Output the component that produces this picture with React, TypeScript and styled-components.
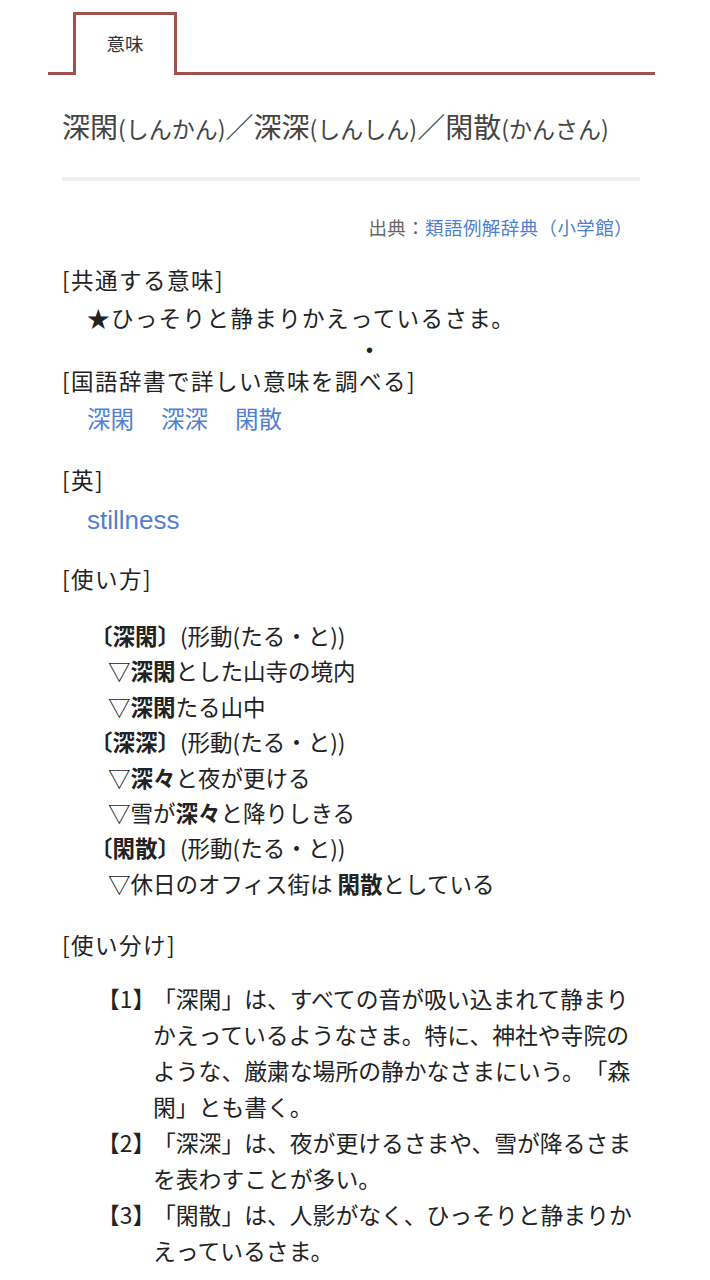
import styled, { createGlobalStyle } from "styled-components";

const GlobalStyle = createGlobalStyle`
  html, body {
    margin: 0;
    padding: 0;
    background: #fff;
  }
  body {
    font-family: "Noto Sans CJK JP", sans-serif;
    color: #222;
    text-spacing-trim: space-all;
  }
`;

const accent = "#a0524d";
const link = "#4f7fd4";

const Page = styled.div`
  width: 710px;
  padding-top: 12px;
  padding-bottom: 40px;
`;

const TabBar = styled.div`
  display: flex;
  height: 60px;
  margin: 0 55px 0 48px;
  border-bottom: 3px solid ${accent};
`;

const Tab = styled.div`
  box-sizing: border-box;
  display: flex;
  align-items: center;
  justify-content: center;
  width: 104px;
  height: 63px;
  margin-left: 25px;
  margin-bottom: -3px;
  padding-bottom: 4px;
  border: 3px solid ${accent};
  border-bottom: 0;
  background: #fff;
  color: #333;
  font-size: 18.5px;
`;

const Content = styled.div`
  padding: 0 70px 0 62px;
`;

const Title = styled.h1`
  margin: 31px 0 0;
  color: #444;
  font-size: 28px;
  font-weight: 400;
  line-height: 40px;
  white-space: nowrap;

  small {
    font-size: 23px;
  }
`;

const Rule = styled.hr`
  height: 4px;
  margin: 29px 0 0;
  border: 0;
  background: #eeeeee;
`;

const Source = styled.p`
  margin: 34px 7px 0 0;
  color: #666;
  font-size: 18.5px;
  letter-spacing: 0.4px;
  line-height: 24px;
  text-align: right;

  a {
    color: ${link};
    text-decoration: none;
  }
`;

const Section = styled.section<{ $gap: number }>`
  margin-top: ${(p) => p.$gap}px;
`;

const Heading = styled.h2`
  margin: 0;
  font-size: 22.5px;
  font-weight: 400;
  letter-spacing: 1.5px;
  line-height: 38px;
`;

const Body = styled.p`
  margin: 0;
  padding-left: 25px;
  font-size: 22.5px;
  letter-spacing: 1.4px;
  line-height: 38px;
`;

const Dot = styled.div`
  padding: 3px 0 0 304px;
  margin-bottom: 0;
  font-family: "Liberation Sans", sans-serif;
  font-size: 20px;
  line-height: 22px;
`;

const Links = styled.div`
  display: flex;
  gap: 27px;
  padding-left: 25px;
  font-size: 23.5px;
  line-height: 38px;

  a {
    color: ${link};
    text-decoration: none;
  }
`;

const English = styled.a`
  display: block;
  margin-top: 3px;
  padding-left: 25px;
  color: ${link};
  font-family: "Liberation Sans", sans-serif;
  font-size: 26px;
  line-height: 38px;
  text-decoration: none;
`;

const Usage = styled.ul`
  margin: 21px 0 0;
  padding: 0 0 0 28px;
  list-style: none;
  font-size: 22.5px;
  line-height: 35.4px;
`;

const UsageRow = styled.li<{ $example?: boolean }>`
  padding-left: ${(p) => (p.$example ? 18 : 0)}px;
  white-space: nowrap;

  b {
    font-weight: 700;
  }
`;

const Notes = styled.ol`
  margin: 18px 0 0;
  padding: 0 0 0 35px;
  list-style: none;
  font-size: 22.8px;
  line-height: 36px;
`;

const Note = styled.li`
  display: grid;
  grid-template-columns: 56px 481px;
`;

const Marker = styled.span`
  white-space: nowrap;
`;

const usages: { head?: string; parts: [string, boolean][] }[] = [
  { head: "〔深閑〕", parts: [["(形動(たる・と))", false]] },
  { parts: [["▽", false], ["深閑", true], ["とした山寺の境内", false]] },
  { parts: [["▽", false], ["深閑", true], ["たる山中", false]] },
  { head: "〔深深〕", parts: [["(形動(たる・と))", false]] },
  { parts: [["▽", false], ["深々", true], ["と夜が更ける", false]] },
  { parts: [["▽雪が", false], ["深々", true], ["と降りしきる", false]] },
  { head: "〔閑散〕", parts: [["(形動(たる・と))", false]] },
  { parts: [["▽休日のオフィス街は ", false], ["閑散", true], ["としている", false]] },
];

const notes = [
  "「深閑」は、すべての音が吸い込まれて静まりかえっているようなさま。特に、神社や寺院のような、厳粛な場所の静かなさまにいう。「森閑」とも書く。",
  "「深深」は、夜が更けるさまや、雪が降るさまを表わすことが多い。",
  "「閑散」は、人影がなく、ひっそりと静まりかえっているさま。",
];

export default function App() {
  return (
    <Page>
      <GlobalStyle />
      <TabBar>
        <Tab>意味</Tab>
      </TabBar>
      <Content>
        <Title>
          深閑<small>(しんかん)</small>／深深<small>(しんしん)</small>／閑散<small>(かんさん)</small>
        </Title>
        <Rule />
        <Source>
          出典：<a href="#">類語例解辞典（小学館）</a>
        </Source>

        <Section $gap={21}>
          <Heading>[共通する意味]</Heading>
          <Body>★ひっそりと静まりかえっているさま。</Body>
          <Dot>•</Dot>
          <Heading>[国語辞書で詳しい意味を調べる]</Heading>
          <Links>
            <a href="#">深閑</a>
            <a href="#">深深</a>
            <a href="#">閑散</a>
          </Links>
        </Section>

        <Section $gap={23}>
          <Heading>[英]</Heading>
          <English href="#">stillness</English>
        </Section>

        <Section $gap={20}>
          <Heading>[使い方]</Heading>
          <Usage>
            {usages.map((u, i) => (
              <UsageRow key={i} $example={!u.head}>
                {u.head && <b>{u.head}</b>}
                {u.parts.map(([t, bold], j) => (bold ? <b key={j}>{t}</b> : <span key={j}>{t}</span>))}
              </UsageRow>
            ))}
          </Usage>
        </Section>

        <Section $gap={24}>
          <Heading>[使い分け]</Heading>
          <Notes>
            {notes.map((n, i) => (
              <Note key={i}>
                <Marker>【{i + 1}】</Marker>
                <span>{n}</span>
              </Note>
            ))}
          </Notes>
        </Section>
      </Content>
    </Page>
  );
}
